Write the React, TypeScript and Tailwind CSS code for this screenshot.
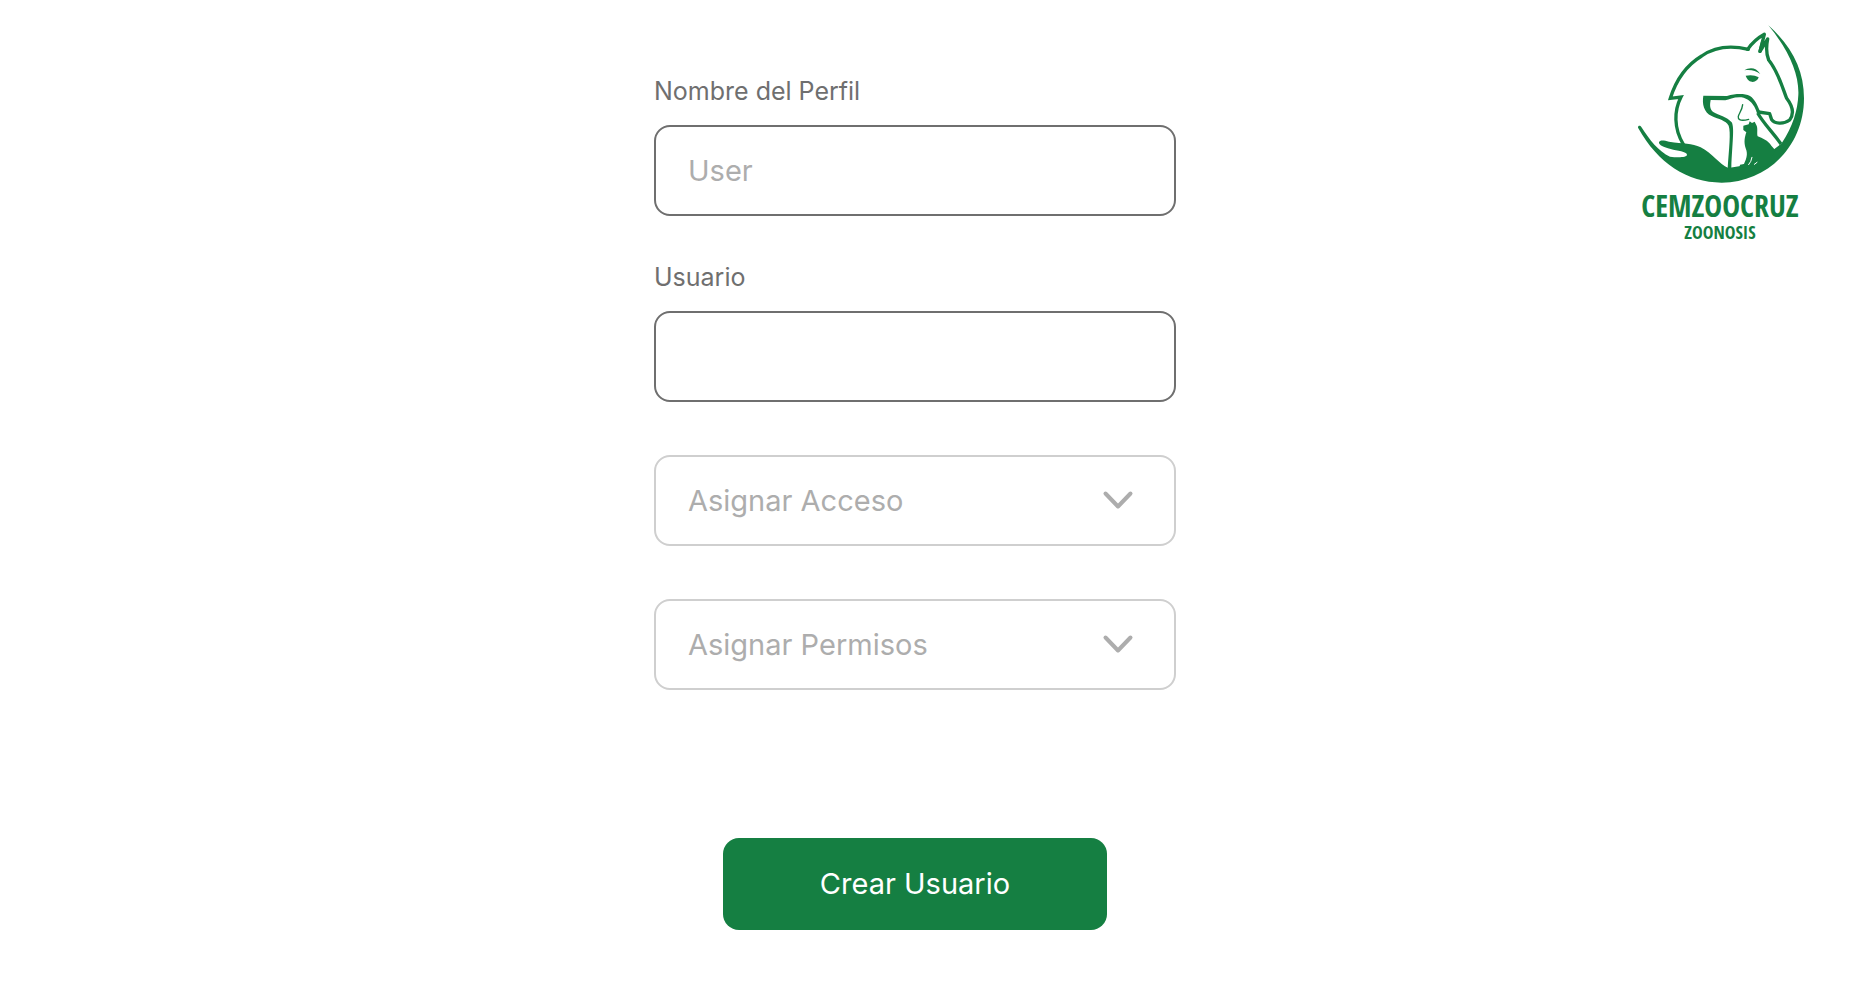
import type { ReactNode } from "react";

const fieldBase =
  "block h-[91px] w-full rounded-2xl border-2 bg-white px-8 text-[29px] leading-9 outline-none";

function TextField({ id, label, placeholder }: { id: string; label: string; placeholder?: string }) {
  return (
    <div className="flex flex-col gap-[18px]">
      <label htmlFor={id} className="text-[25px] leading-8 text-[#6f6f6f]">
        {label}
      </label>
      <input
        id={id}
        type="text"
        placeholder={placeholder}
        className={`${fieldBase} border-[#6f6f6f] text-[#6f6f6f] placeholder:text-[#adadad]`}
      />
    </div>
  );
}

function SelectField({ label, children }: { label: string; children?: ReactNode }) {
  return (
    <div className="relative">
      <select
        aria-label={label}
        defaultValue=""
        className={`${fieldBase} appearance-none border-[#cfcfcf] text-[#adadad]`}
      >
        <option value="">{label}</option>
        {children}
      </select>
      <svg
        aria-hidden="true"
        viewBox="0 0 32 20"
        className="pointer-events-none absolute top-[35px] right-[42px] h-5 w-8"
        fill="none"
        stroke="#adadad"
        strokeWidth="4"
        strokeLinecap="round"
        strokeLinejoin="round"
      >
        <path d="M3.5 3.5 16 16.5 28.5 3.5" />
      </svg>
    </div>
  );
}

function Logo() {
  return (
    <div className="flex w-44 flex-col items-center text-[#157f42]">
      <svg viewBox="36 42 528 480" className="h-40 w-44" role="img" aria-label="Cemzoocruz">
        <g fill="none" stroke="currentColor" strokeWidth="10" strokeLinejoin="round" strokeLinecap="round">
          {/* horse: mane, ear, face and muzzle */}
          <path
            strokeLinejoin="miter"
            d="M385 118C335 106 286 109 245 138C202 164 169 207 151 265L183 261C162 302 161 355 190 403"
          />
          <path d="M383 118C397 98 413 84 433 73L420 124L443 87C439 107 439 133 446 150C475 185 489 238 500 265C516 286 525 309 509 330C490 344 463 341 455 329L449 311L415 306" />
          <path strokeLinecap="butt" d="M413 309C430 340 461 370 483 402" />
          <path d="M420 124L428 96" />
        </g>
        <g fill="currentColor">
          {/* crescent and hand */}
          <path d="M445 46C515 108 552 178 552 265C552 407 443 518 305 518C202 518 113 459 55 355C51 348 60 344 64 351C89 390 115 424 150 440C172 443 202 443 201 434C200 424 172 423 152 417C129 412 116 405 117 397C119 389 132 391 147 395C190 402 216 398 242 412C278 431 297 462 325 474L362 468L462 418L485 400C519 350 533 299 535 255C538 191 505 118 445 46Z" />
          {/* dog: head and neck */}
          <path d="M250 257L321 258C350 250 374 251 390 258C405 268 412 285 420 304L410 306C402 282 390 270 371 263C345 259 330 268 316 271L272 270C269 286 269 298 281 307C295 315 321 321 335 337C344 353 337 395 334 474L323 474C327 416 333 368 326 347C317 331 297 328 275 318C251 306 246 282 250 257Z" />
          {/* horse eye */}
          <path d="M373 181C388 171 408 171 421 192C407 183 394 178 373 181Z" />
          <path d="M377 197C391 194 405 195 416 202C411 219 386 223 377 197Z" />
          {/* cat */}
          <path d="M370 347L386 343L389 334L396 339L404 335L410 347C414 357 410 371 413 379C427 385 444 391 454 407L466 421L440 470L358 474L360 464L372 462C380 445 384 432 377 415C371 396 374 382 379 367L370 360Z" />
        </g>
        <path d="M368 284C366 307 346 319 359 329Q367 333 386 328" fill="none" stroke="currentColor" strokeWidth="4" strokeLinecap="round" />
        <path d="M396 442Q394 455 386 464M411 457L403 463" fill="none" stroke="white" strokeWidth="3" strokeLinecap="round" />
      </svg>
      <p className="mt-1.5 font-['Open_Sans_Condensed','Roboto_Condensed',sans-serif] text-[30px] leading-8 font-bold">
        CEMZOOCRUZ
      </p>
      <p className="font-['Open_Sans_Condensed','Roboto_Condensed',sans-serif] text-[18px] leading-5 font-bold">
        ZOONOSIS
      </p>
    </div>
  );
}

export default function App() {
  return (
    <main className="grid min-h-screen grid-cols-[1fr_minmax(0,522px)_1fr] items-start bg-white pr-[23px] pb-16 font-['Inter',sans-serif]">
      <form className="col-start-2 flex flex-col pt-[75px]" onSubmit={(e) => e.preventDefault()}>
        <div className="flex flex-col gap-[45px]">
          <TextField id="perfil" label="Nombre del Perfil" placeholder="User" />
          <TextField id="usuario" label="Usuario" />
        </div>
        <div className="mt-[53px] flex flex-col gap-[53px]">
          <SelectField label="Asignar Acceso" />
          <SelectField label="Asignar Permisos" />
        </div>
        <button
          type="submit"
          className="mt-[148px] h-[92px] w-96 max-w-full self-center rounded-2xl bg-[#157f42] text-[29px] leading-9 text-white"
        >
          Crear Usuario
        </button>
      </form>
      <div className="col-start-3 mt-6 mr-[22px] justify-self-end">
        <Logo />
      </div>
    </main>
  );
}
